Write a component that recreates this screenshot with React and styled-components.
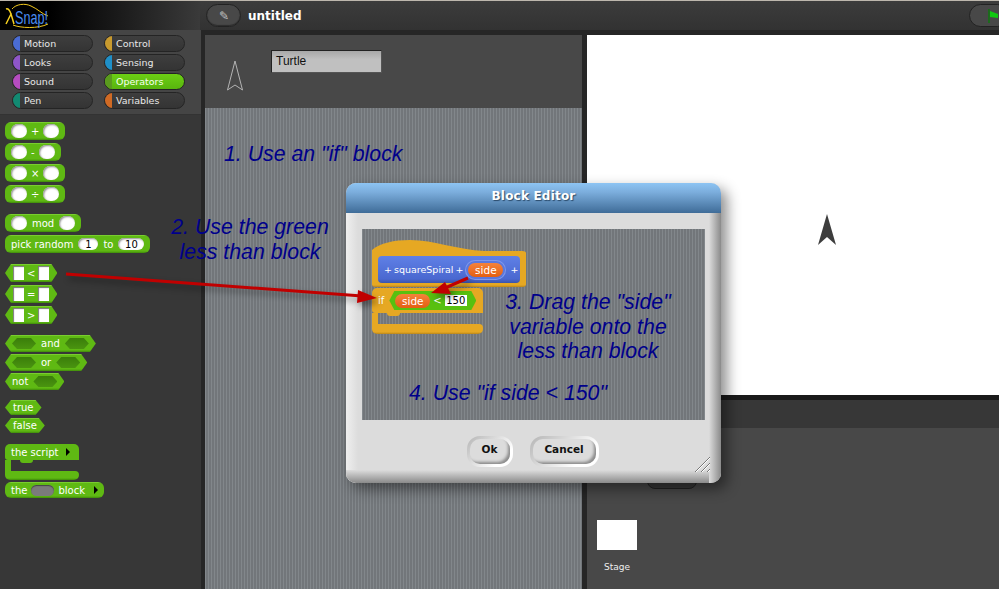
import React from 'react';
import styled, { createGlobalStyle } from 'styled-components';

const GlobalStyle = createGlobalStyle`
  html, body { margin: 0; padding: 0; background: #373737; }
  * { box-sizing: border-box; }
`;

const uiFont = '"DejaVu Sans", Verdana, sans-serif';
const stripes = 'repeating-linear-gradient(90deg, #82878b 0 1px, #72767a 1px 3px)';
const green = '#5fb913';
const orange = '#e6a823';
const hexClip = (n) =>
  `polygon(${n}px 0, calc(100% - ${n}px) 0, 100% 50%, calc(100% - ${n}px) 100%, ${n}px 100%, 0 50%)`;

const Page = styled.div`
  position: relative;
  width: 999px;
  height: 589px;
  overflow: hidden;
  display: flex;
  flex-direction: column;
  font-family: ${uiFont};
  background: #262626;
`;

/* top bar */
const TopBar = styled.header`
  height: 30px;
  flex: none;
  display: flex;
  align-items: center;
  border-top: 1px solid #bdb7ad;
  background: linear-gradient(#3c3c3c, #323232);
`;
const LogoBox = styled.div`
  width: 200px;
  height: 100%;
  flex: none;
  background: linear-gradient(90deg, #000 0, #000 25%, #3a3a3a 100%);
`;
const PillButton = styled.button`
  width: 35px;
  height: 23px;
  margin-left: 6px;
  padding: 0;
  display: flex;
  align-items: center;
  justify-content: center;
  border: 1px solid #222;
  border-radius: 12px;
  background: #484848;
  box-shadow: inset 0 -1px 1px #2c2c2c;
  color: #c4c4c4;
  font-size: 12px;
`;
const ProjectName = styled.span`
  margin-left: 7px;
  color: #fff;
  font-size: 12px;
  font-weight: 700;
  flex: 1;
`;
const FlagButton = styled.div`
  width: 40px;
  height: 23px;
  margin-right: -10px;
  padding-left: 18px;
  display: flex;
  align-items: center;
  border: 1px solid #222;
  border-radius: 12px;
  background: #484848;
`;

/* main columns */
const Main = styled.div`
  flex: 1;
  min-height: 0;
  display: flex;
`;
const LeftColumn = styled.aside`
  width: 201px;
  flex: none;
  display: flex;
  flex-direction: column;
`;
const Categories = styled.nav`
  height: 85px;
  flex: none;
  padding: 5px 15px 0 12px;
  display: grid;
  grid-template-columns: 81px 81px;
  grid-auto-rows: 17px;
  column-gap: 11px;
  row-gap: 2px;
  background: #454545;
  border-bottom: 1px solid #333;
`;
const CategoryPill = styled.div`
  position: relative;
  overflow: hidden;
  padding-left: 11px;
  border-radius: 9px;
  border: 1px solid #242424;
  background: ${(p) => (p.$active ? 'linear-gradient(#6ccf14, #58b40e)' : 'linear-gradient(#3e3e3e, #343434)')};
  color: ${(p) => (p.$active ? '#f7fff0' : '#e8e8e8')};
  font-size: 9.5px;
  line-height: 15px;
  &::before {
    content: '';
    position: absolute;
    left: 0;
    top: 0;
    bottom: 0;
    width: 7px;
    background: ${(p) => p.$color};
  }
`;
const Palette = styled.div`
  flex: 1;
  padding: 7px 0 0 5px;
  background: #373737;
  display: flex;
  flex-direction: column;
  align-items: flex-start;
`;
const BlockGroup = styled.div`
  display: flex;
  flex-direction: column;
  align-items: flex-start;
  gap: ${(p) => p.$gap || 3}px;
  margin-bottom: ${(p) => p.$after || 11}px;
`;
const blockText = `
  display: flex;
  align-items: center;
  color: #fff;
  font-size: 10px;
  white-space: nowrap;
  background: linear-gradient(#86d83c 0, ${green} 1.5px, ${green} calc(100% - 2px), #3f8a0a 100%);
`;
const Reporter = styled.div`
  ${blockText}
  height: ${(p) => p.$h || 18}px;
  padding: 0 6px;
  gap: ${(p) => p.$gap || 5}px;
  border-radius: 6px;
`;
const Predicate = styled.div`
  ${blockText}
  height: ${(p) => p.$h || 18}px;
  padding: 0 ${(p) => p.$pad || 8}px;
  gap: ${(p) => p.$gap || 5}px;
  clip-path: ${hexClip(6)};
`;
const RoundSlot = styled.span`
  width: ${(p) => p.$w || 16}px;
  height: ${(p) => p.$h || 14}px;
  display: flex;
  align-items: center;
  justify-content: center;
  border-radius: 7px;
  background: #fff;
  box-shadow: inset 1px 1px 2px #8d8d8d;
  color: #000;
  font-size: 10px;
`;
const SquareSlot = styled.span`
  width: 11px;
  height: 14px;
  background: #fff;
  box-shadow: inset 1px 1px 1px #777;
`;
const BoolSlot = styled.span`
  width: 24px;
  height: 11px;
  background: linear-gradient(#3a7e0a, #4a9410);
  clip-path: ${hexClip(5)};
`;
const GraySlot = styled.span`
  width: 23px;
  height: 11px;
  border-radius: 6px;
  background: #7b7b7b;
  box-shadow: inset 0 1px 1px #444;
`;
const Triangle = styled.span`
  width: 0;
  height: 0;
  margin-left: ${(p) => p.$ml || 0}px;
  border-left: 4px solid #000;
  border-top: 4px solid transparent;
  border-bottom: 4px solid transparent;
`;
const CBlock = styled.div`
  display: flex;
  flex-direction: column;
  width: ${(p) => p.$w}px;
`;
const CHead = styled.div`
  display: flex;
  align-items: center;
  gap: ${(p) => p.$gap || 8}px;
  height: ${(p) => p.$h}px;
  padding-left: ${(p) => p.$pad || 6}px;
  color: #fff;
  font-size: 10px;
  white-space: nowrap;
  border-radius: 5px 5px 0 3px;
  background: ${(p) => p.$bg};
`;
const CMouth = styled.div`
  position: relative;
  height: ${(p) => p.$h}px;
  width: 6px;
  background: ${(p) => p.$bg};
  &::before {
    content: '';
    position: absolute;
    left: 15px;
    top: 0;
    width: 13px;
    height: 3px;
    border-radius: 0 0 3px 3px;
    background: ${(p) => p.$bg};
  }
`;
const CFoot = styled.div`
  height: ${(p) => p.$h}px;
  border-radius: 0 4px 5px 5px;
  background: linear-gradient(${(p) => p.$bg} calc(100% - 2px), ${(p) => p.$edge} 100%);
`;

/* script column */
const ScriptColumn = styled.section`
  width: 377px;
  flex: none;
  margin-left: 4px;
  margin-top: 5px;
  display: flex;
  flex-direction: column;
`;
const SpriteHeader = styled.div`
  height: 73px;
  flex: none;
  display: flex;
  align-items: flex-start;
  padding: 15px 0 0 22px;
  gap: 28px;
  background: #484848;
`;
const NameField = styled.div`
  width: 111px;
  height: 23px;
  padding-left: 4px;
  color: #111;
  font: 12px/20px 'Liberation Sans', Arial, sans-serif;
  border: 1px solid #555;
  border-top-color: #222;
  border-left-color: #222;
  background: linear-gradient(#a8a8a8, #c0c0c0 40%);
`;
const Scripts = styled.div`
  flex: 1;
  background: ${stripes};
`;

/* right column */
const RightColumn = styled.section`
  flex: 1;
  margin-left: 5px;
  margin-top: 5px;
  display: flex;
  flex-direction: column;
`;
const Stage = styled.div`
  height: 360px;
  flex: none;
  display: flex;
  align-items: center;
  justify-content: center;
  padding: 30px 0 0 68px;
  background: #fff;
`;
const CorralBar = styled.div`
  height: 33px;
  flex: none;
  border-top: 5px solid #1a1a1a;
  background: #373737;
`;
const Corral = styled.div`
  flex: 1;
  display: flex;
  align-items: flex-start;
  padding-left: 10px;
  background: #484848;
`;
const StageIcon = styled.div`
  width: 40px;
  margin-top: 92px;
  display: flex;
  flex-direction: column;
  align-items: center;
  gap: 12px;
  color: #eee;
  font-size: 9px;
`;
const StageThumb = styled.div`
  width: 40px;
  height: 30px;
  background: #fff;
`;
const SpriteTab = styled.div`
  width: 50px;
  height: 30px;
  margin: 31px 0 0 10px;
  border-radius: 0 0 8px 8px;
  border: 1px solid #222;
  background: #383838;
`;

/* dialog */
const Dialog = styled.div`
  position: absolute;
  z-index: 1;
  left: 346px;
  top: 183px;
  width: 375px;
  height: 300px;
  display: flex;
  flex-direction: column;
  border-radius: 10px;
  background: #dcdcdc;
  box-shadow: 6px 6px 14px rgba(0, 0, 0, 0.45);
  overflow: hidden;
`;
const DialogTitle = styled.div`
  height: 30px;
  flex: none;
  text-align: center;
  color: #fff;
  font-size: 12px;
  font-weight: 700;
  line-height: 27px;
  letter-spacing: 0.2px;
  text-shadow: 1px 1px 1px #2a4a6a;
  background: linear-gradient(#8dc4f3, #7caedd 30%, #3f6c98);
`;
const DialogBody = styled.div`
  flex: 1;
  min-height: 0;
  position: relative;
  display: flex;
  flex-direction: column;
  align-items: center;
  padding: 16px 16px 0;
  &::after {
    content: '';
    position: absolute;
    inset: 0;
    pointer-events: none;
    background:
      linear-gradient(270deg, #8a8a8a 0, #dcdcdc 12px, transparent 12px) right / 100% 100% no-repeat,
      linear-gradient(0deg, #8a8a8a 0, #dcdcdc 13px, transparent 13px) bottom / 100% 100% no-repeat,
      linear-gradient(90deg, #efefef 0, #dcdcdc 12px, transparent 12px) left / 100% 100% no-repeat;
  }
`;
const Workspace = styled.div`
  width: 343px;
  height: 191px;
  flex: none;
  padding: 11px 0 0 10px;
  background: ${stripes};
  position: relative;
  z-index: 1;
`;
const DialogButtons = styled.div`
  display: flex;
  gap: 17px;
  margin: 16px 0 0 -2px;
  position: relative;
  z-index: 1;
`;
const DialogButton = styled.button`
  width: ${(p) => p.$w}px;
  height: 31px;
  padding: 3px;
  border: 0;
  border-radius: 13px;
  background: linear-gradient(135deg, #b4b4b4, #ffffff 75%);
  font: 700 10.5px ${uiFont};
  color: #111;
  & > span {
    display: block;
    height: 100%;
    line-height: 21px;
    border-radius: 10px;
    background: #dcdcdc;
    box-shadow: inset -3px -3px 3px -1px #8c8c8c;
  }
`;
const ResizeGrip = styled.svg`
  position: absolute;
  right: 11px;
  bottom: 11px;
  z-index: 2;
`;

/* script blocks in the editor */
const HatCap = styled.svg`
  display: block;
`;
const HatBody = styled.div`
  width: 154px;
  height: 34px;
  padding: 3px 6px 0;
  border-radius: 0 0 3px 3px;
  background: linear-gradient(${orange} calc(100% - 2px), #b9851a 100%);
`;
const CustomDef = styled.div`
  height: 27px;
  display: flex;
  align-items: center;
  gap: 2px;
  padding-left: 6px;
  border-radius: 4px;
  color: #fff;
  font-size: 9.5px;
  white-space: nowrap;
  background: linear-gradient(#5f80e6, #4a68d0 85%, #3b55aa);
`;
const ParamRing = styled.span`
  padding: 2px;
  margin: 0 3px 0 1px;
  border-radius: 9px;
  background: #5b78dc;
  box-shadow: 0 0 0 1px #7f98ec;
`;
const VarPill = styled.span`
  display: block;
  width: 35px;
  height: 14px;
  text-align: center;
  border-radius: 7px;
  color: #fff;
  font-size: 10.5px;
  line-height: 14px;
  background: linear-gradient(#f5823a, #e45f12);
`;
const IfBlockWrap = styled.div`
  margin-top: 1px;
`;
const IfCondition = styled.div`
  display: flex;
  align-items: center;
  gap: 3px;
  width: 87px;
  height: 19px;
  padding-left: 6px;
  color: #fff;
  font-size: 10px;
  background: #58c010;
  clip-path: ${hexClip(5)};
`;
const NumberBox = styled.span`
  width: 22px;
  height: 11px;
  text-align: center;
  color: #000;
  font-size: 10px;
  line-height: 11px;
  background: #fff;
`;

/* annotations over the picture */
const Note = styled.div`
  position: absolute;
  z-index: 2;
  left: ${(p) => p.$x}px;
  top: ${(p) => p.$y}px;
  width: ${(p) => p.$w || 260}px;
  text-align: ${(p) => (p.$center ? 'center' : 'left')};
  color: #00008b;
  font: italic 21.3px/24.5px 'Liberation Sans', Arial, sans-serif;
  white-space: pre-line;
`;
const ArrowLayer = styled.svg`
  position: absolute;
  z-index: 2;
  inset: 0;
  pointer-events: none;
  filter: drop-shadow(3px 4px 3px rgba(0, 0, 0, 0.4));
`;

const categories = [
  ['Motion', '#4a6cd4'],
  ['Control', '#c89a2e'],
  ['Looks', '#8f56c8'],
  ['Sensing', '#1f8fc8'],
  ['Sound', '#b64cc0'],
  ['Operators', '#5a9a1e', true],
  ['Pen', '#128a72'],
  ['Variables', '#d06a24'],
];

const Logo = () => (
  <svg width="70" height="29" viewBox="0 0 70 29">
    <path d="M6 23 L11 13 Q9 7 6 8 M11 13 L14 23" fill="none" stroke="#f5d020" strokeWidth="1.5" />
    <path
      d="M12 8 C16 3 25 2 31 5 C38 8 42 13 48 15 M13 24 C20 27 38 28 48 23"
      fill="none"
      stroke="#f2c81c"
      strokeWidth="1"
    />
    <text
      x="15"
      y="23"
      fontFamily="Liberation Sans, Arial, sans-serif"
      fontSize="19"
      fill="#4a8cf0"
      textLength="33"
      lengthAdjust="spacingAndGlyphs"
    >
      Snap!
    </text>
  </svg>
);

const App = () => (
  <Page>
    <GlobalStyle />
    <TopBar>
      <LogoBox>
        <Logo />
      </LogoBox>
      <PillButton>✎</PillButton>
      <ProjectName>untitled</ProjectName>
      <FlagButton>
        <svg width="11" height="14" viewBox="0 0 11 14">
          <path d="M1 0 V14" stroke="#0c7a0c" strokeWidth="1.4" />
          <path d="M2 2 L10 5 L10 9 L2 8 Z" fill="#10c810" />
        </svg>
      </FlagButton>
    </TopBar>
    <Main>
      <LeftColumn>
        <Categories>
          {categories.map(([name, color, active]) => (
            <CategoryPill key={name} $color={color} $active={active}>
              {name}
            </CategoryPill>
          ))}
        </Categories>
        <Palette>
          <BlockGroup $gap={3}>
            <Reporter $gap={4}><RoundSlot />+<RoundSlot /></Reporter>
            <Reporter $gap={4}><RoundSlot />-<RoundSlot /></Reporter>
            <Reporter $gap={4}><RoundSlot />×<RoundSlot /></Reporter>
            <Reporter $gap={4}><RoundSlot />÷<RoundSlot /></Reporter>
          </BlockGroup>
          <BlockGroup $gap={3}>
            <Reporter><RoundSlot />mod<RoundSlot /></Reporter>
            <Reporter $gap={5}>pick random<RoundSlot $w={20} $h={12}>1</RoundSlot>to<RoundSlot $w={26} $h={12}>10</RoundSlot></Reporter>
          </BlockGroup>
          <BlockGroup $gap={3}>
            <Predicate $gap={3}><SquareSlot />&lt;<SquareSlot /></Predicate>
            <Predicate $gap={3}><SquareSlot />=<SquareSlot /></Predicate>
            <Predicate $gap={3}><SquareSlot />&gt;<SquareSlot /></Predicate>
          </BlockGroup>
          <BlockGroup $gap={2} $after={10}>
            <Predicate $h={17} $pad={7} $gap={5}><BoolSlot />and<BoolSlot /></Predicate>
            <Predicate $h={17} $pad={7} $gap={5}><BoolSlot />or<BoolSlot /></Predicate>
            <Predicate $h={17} $pad={7} $gap={5}>not<BoolSlot /></Predicate>
          </BlockGroup>
          <BlockGroup $gap={3}>
            <Predicate $h={15} $pad={8}>true</Predicate>
            <Predicate $h={15} $pad={8}>false</Predicate>
          </BlockGroup>
          <BlockGroup $gap={2} $after={1}>
            <CBlock $w={74}>
              <CHead $h={16} $bg={green} $pad={6}>the script<Triangle /></CHead>
              <CMouth $h={11} $bg={green} />
              <CFoot $h={9} $bg={green} $edge="#3f8a0a" />
            </CBlock>
            <Reporter $h={16} $gap={4}>the<GraySlot />block<Triangle $ml={5} /></Reporter>
          </BlockGroup>
        </Palette>
      </LeftColumn>
      <ScriptColumn>
        <SpriteHeader>
          <svg width="16" height="30" viewBox="0 0 16 30" style={{ marginTop: 11, overflow: 'visible' }}>
            <path d="M8 0 L0.5 29 L8 24 L15.5 29 Z" fill="none" stroke="#b4b4b4" strokeWidth="1" />
          </svg>
          <NameField>Turtle</NameField>
        </SpriteHeader>
        <Scripts />
      </ScriptColumn>
      <RightColumn>
        <Stage>
          <svg width="18" height="32" viewBox="0 0 18 32">
            <path d="M9 0 L0 31 L9 23 L18 31 Z" fill="#3d3d3d" />
          </svg>
        </Stage>
        <CorralBar />
        <Corral>
          <StageIcon>
            <StageThumb />
            Stage
          </StageIcon>
          <SpriteTab />
        </Corral>
      </RightColumn>
    </Main>

    <Note $x={224} $y={142}>1. Use an "if" block</Note>
    <Note $x={120} $y={215} $center>{'2. Use the green\nless than block'}</Note>

    <Dialog>
      <DialogTitle>Block Editor</DialogTitle>
      <DialogBody>
        <Workspace>
          <HatCap width="154" height="13" viewBox="0 0 154 13">
            <path d="M0 13 V10 C8 3 22 0 38 0 C62 0 86 10 112 11 L150 11 Q154 11 154 13 Z" fill={orange} />
          </HatCap>
          <HatBody>
            <CustomDef>
              <span>+</span>
              <span>squareSpiral</span>
              <span>+</span>
              <ParamRing><VarPill>side</VarPill></ParamRing>
              <span>+</span>
            </CustomDef>
          </HatBody>
          <IfBlockWrap>
            <CBlock $w={111}>
              <CHead $h={25} $bg={orange} $gap={5}>
                if
                <IfCondition>
                  <VarPill>side</VarPill>&lt;<NumberBox>150</NumberBox>
                </IfCondition>
              </CHead>
              <CMouth $h={11} $bg={orange} />
              <CFoot $h={10} $bg={orange} $edge="#b9851a" />
            </CBlock>
          </IfBlockWrap>
        </Workspace>
        <DialogButtons>
          <DialogButton $w={46}><span>Ok</span></DialogButton>
          <DialogButton $w={69}><span>Cancel</span></DialogButton>
        </DialogButtons>
        <ResizeGrip width="15" height="15" viewBox="0 0 15 15">
          <path d="M0 15 L15 0 M6 15 L15 6 M12 15 L15 12" stroke="#777" strokeWidth="1" />
          <path d="M1 15 L15 1 M7 15 L15 7 M13 15 L15 13" stroke="#fff" strokeWidth="1" />
        </ResizeGrip>
      </DialogBody>
    </Dialog>

    <ArrowLayer width="999" height="589" viewBox="0 0 999 589">
      <path d="M66 274 L362 296" stroke="#c00000" strokeWidth="3" />
      <polygon points="377,298 358,290 357,303" fill="#c00000" />
      <path d="M468 278 L445 288" stroke="#c00000" strokeWidth="3" />
      <polygon points="431,293 445,282 451,294" fill="#c00000" />
    </ArrowLayer>

    <Note $x={458} $y={290} $center>{'3. Drag the "side"\nvariable onto the\nless than block'}</Note>
    <Note $x={409} $y={381}>4. Use "if side &lt; 150"</Note>
  </Page>
);

export default App;
